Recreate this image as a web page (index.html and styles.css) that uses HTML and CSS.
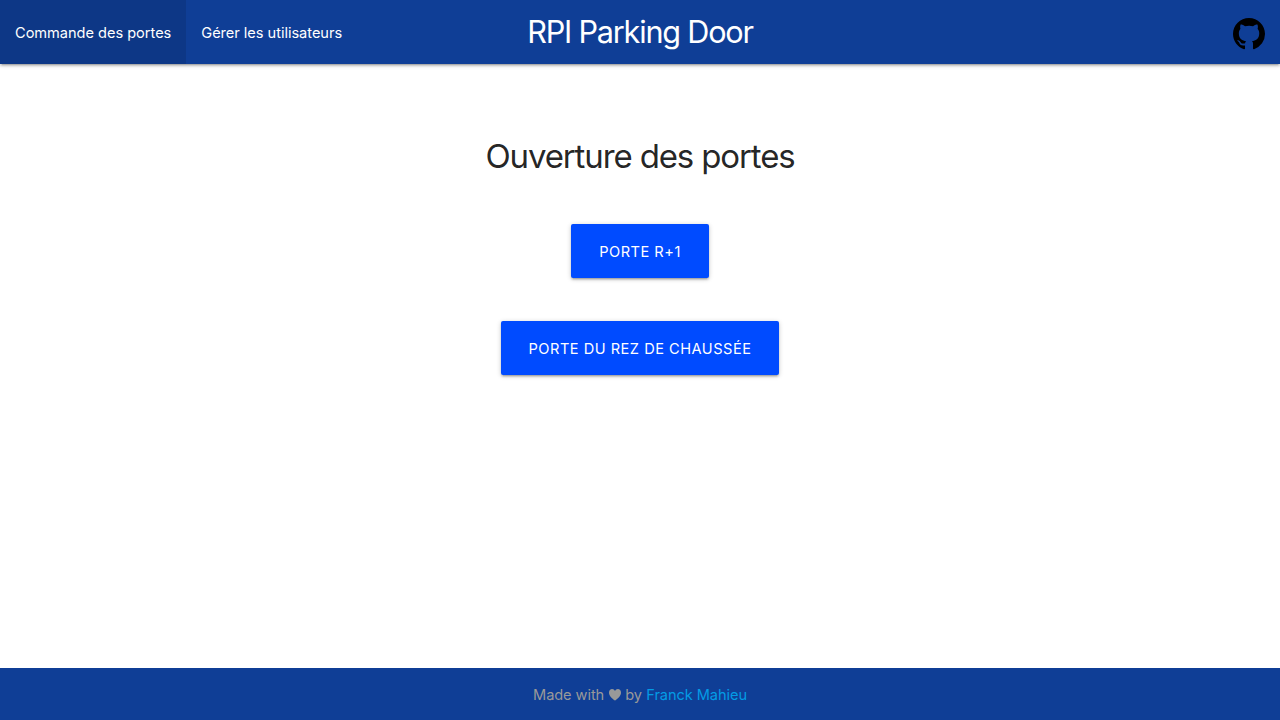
FILE: index.html
```html
<!DOCTYPE html>
<html lang="fr">
<head>
<meta charset="utf-8">
<title>RPI Parking Door</title>
<link rel="stylesheet" href="styles.css">
</head>
<body>
<nav class="navbar">
  <ul class="menu">
    <li class="menu-item active"><a class="menu-link" href="#">Commande des portes</a></li>
    <li class="menu-item"><a class="menu-link" href="#">Gérer les utilisateurs</a></li>
  </ul>
  <a class="brand" href="#">RPI Parking Door</a>
  <a class="github" href="#" aria-label="GitHub">
    <svg width="32" height="32" viewBox="0 0 16 16"><path fill="#000" fill-rule="evenodd" d="M8 0C3.58 0 0 3.58 0 8c0 3.54 2.29 6.53 5.47 7.59.4.07.55-.17.55-.38 0-.19-.01-.82-.01-1.49-2.01.37-2.53-.49-2.69-.94-.09-.23-.48-.94-.82-1.13-.28-.15-.68-.52-.01-.53.63-.01 1.08.58 1.23.82.72 1.21 1.87.87 2.33.66.07-.52.28-.87.51-1.07-1.78-.2-3.64-.89-3.64-3.95 0-.87.31-1.59.82-2.15-.08-.2-.36-1.02.08-2.12 0 0 .67-.21 2.2.82.64-.18 1.32-.27 2-.27s1.36.09 2 .27c1.53-1.04 2.2-.82 2.2-.82.44 1.1.16 1.92.08 2.12.51.56.82 1.27.82 2.15 0 3.07-1.87 3.75-3.65 3.95.29.25.54.73.54 1.48 0 1.07-.01 1.93-.01 2.2 0 .21.15.46.55.38A8.01 8.01 0 0 0 16 8c0-4.42-3.58-8-8-8z"/></svg>
  </a>
</nav>
<main class="content">
  <h1 class="title">Ouverture des portes</h1>
  <button class="btn">PORTE R+1</button>
  <button class="btn">PORTE DU REZ DE CHAUSSÉE</button>
</main>
<footer class="footer">
  <span>Made with</span>
  <svg class="heart" width="12" height="12" viewBox="0 0 12 12"><path fill="currentColor" d="M6 11.600C3.500 9.800 0 7 0 3.700 0 1.300 1.400 0 3.100 0 4.400 0 5.500.8 6 1.900 6.500.8 7.600 0 8.900 0 10.600 0 12 1.300 12 3.700 12 7 8.500 9.800 6 11.600z"/></svg>
  <span>by</span>
  <a class="author" href="#">Franck Mahieu</a>
</footer>
</body>
</html>
```
FILE: styles.css
```css
* { box-sizing: border-box; }
body {
  margin: 0;
  min-height: 100vh;
  display: flex;
  flex-direction: column;
  font-family: Inter, "Liberation Sans", sans-serif;
  font-size: 14.6px;
  color: rgba(0, 0, 0, 0.87);
  background: #fff;
}
a { text-decoration: none; color: inherit; }
.navbar {
  height: 64px;
  display: grid;
  grid-template-columns: 1fr auto 1fr;
  background: #0f3e96;
  color: #fff;
  box-shadow: 0 2px 2px 0 rgba(0,0,0,.14), 0 3px 1px -2px rgba(0,0,0,.12), 0 1px 5px 0 rgba(0,0,0,.2);
}
.menu { display: flex; list-style: none; margin: 0; padding: 0; }
.menu-link {
  display: block;
  height: 64px;
  padding: 1px 15px 0;
  line-height: 64px;
  letter-spacing: -.03px;
  white-space: nowrap;
}
.active { background: rgba(0, 0, 0, 0.1); }
.brand {
  font-size: 30.6px;
  line-height: 64px;
  height: 64px;
  letter-spacing: -1.2px;
}
.github { justify-self: end; padding: 18px 15px 0; }
.github svg { display: block; }
.content {
  flex: 1;
  display: flex;
  flex-direction: column;
  align-items: center;
  padding-top: 68px;
}
.title {
  margin: 0 0 43px;
  font-size: 33px;
  font-weight: 400;
  line-height: 49px;
  letter-spacing: -1.13px;
}
.btn {
  height: 54px;
  padding: 1px 28px 0;
  border: 0;
  border-radius: 2px;
  margin-bottom: 43px;
  background: #004bff;
  color: #fff;
  font: 400 14.6px Inter, sans-serif;
  letter-spacing: .5px;
  box-shadow: 0 2px 2px 0 rgba(0,0,0,.14), 0 3px 1px -2px rgba(0,0,0,.12), 0 1px 5px 0 rgba(0,0,0,.2);
}
.footer {
  height: 52px;
  display: flex;
  align-items: center;
  justify-content: center;
  gap: 4.5px;
  padding-top: 1px;
  background: #0f3e96;
  color: #999;
  letter-spacing: -.08px;
}
.author { color: #039be5; }
```
